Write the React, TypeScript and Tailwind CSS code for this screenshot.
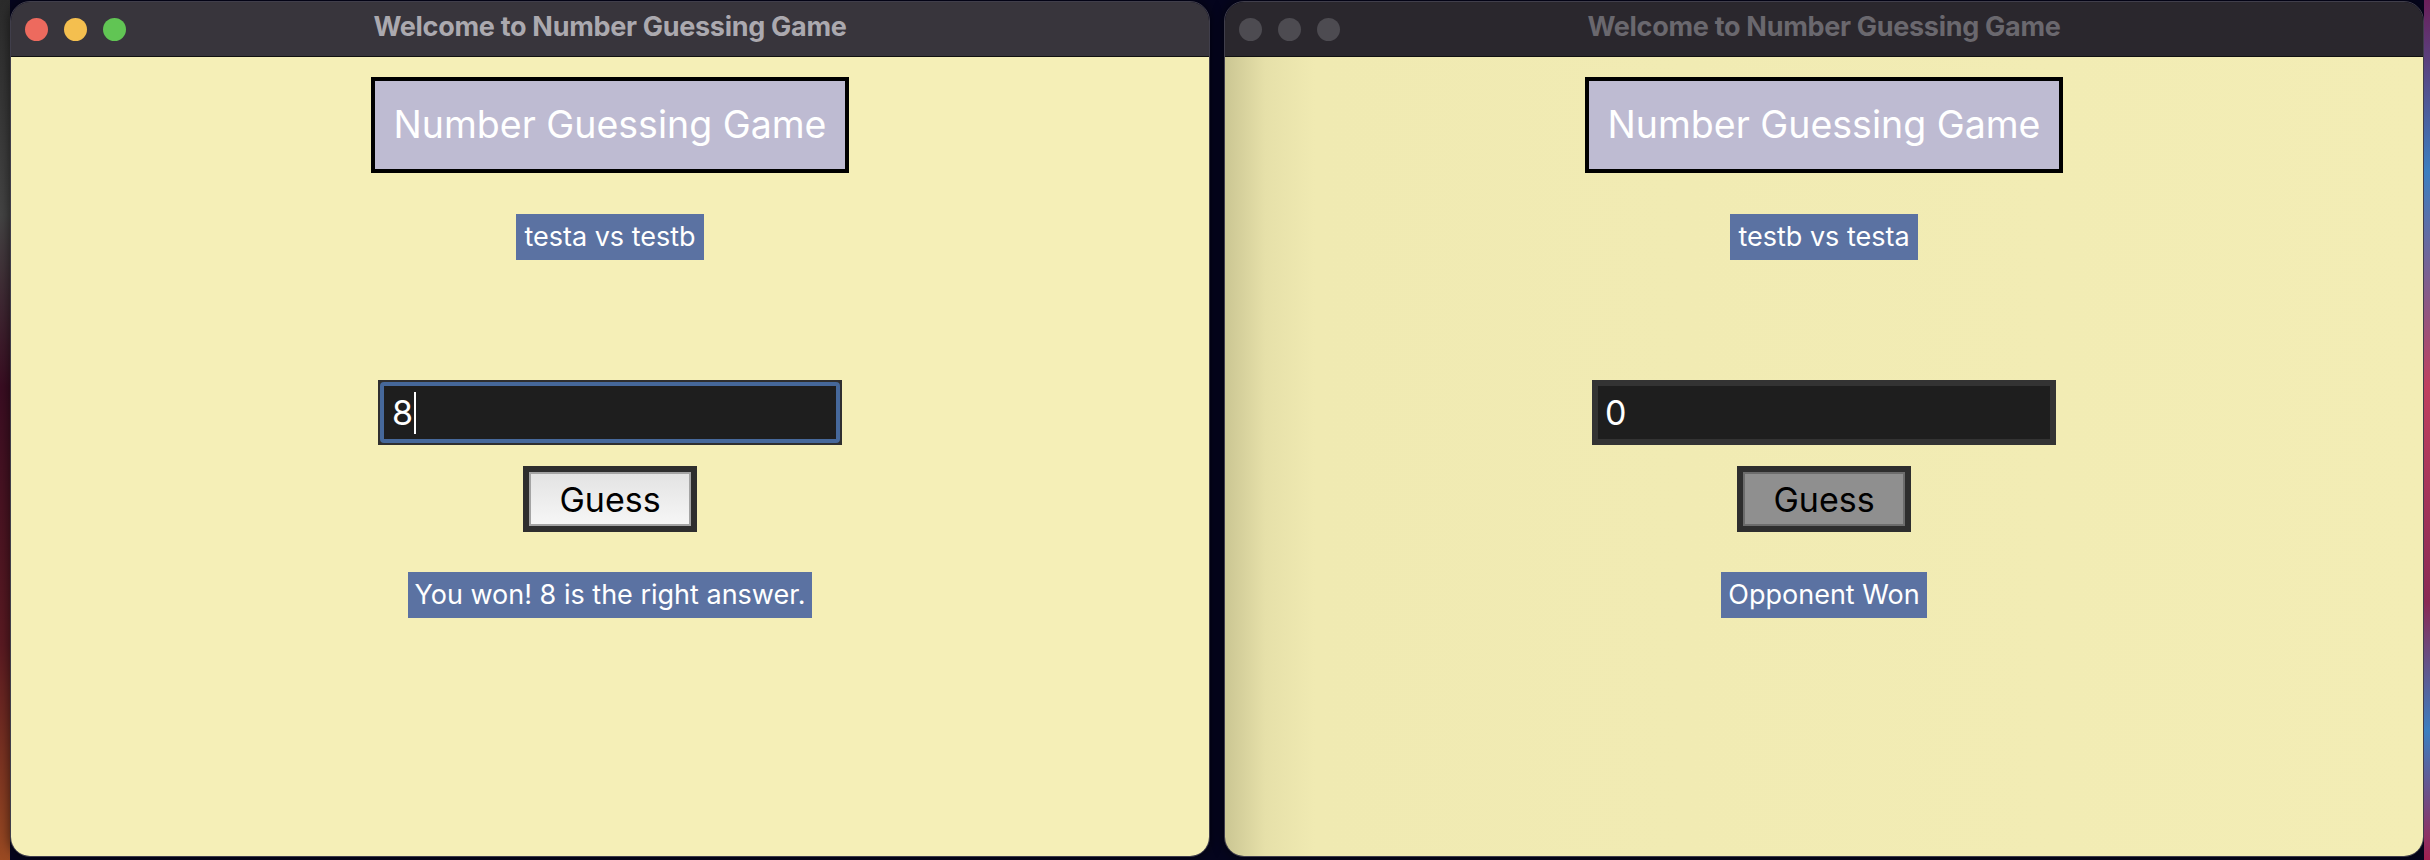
import React from 'react';

type WinProps = {
  active: boolean;
  players: string;
  value: string;
  result: string;
};

function TrafficLights({ active }: { active: boolean }) {
  return (
    <div className="flex items-center gap-[16px] pl-[14px]">
      <span className={`w-[23px] h-[23px] rounded-full ${active ? 'bg-[#ed6a5e]' : 'bg-[#4d4b51]'}`} />
      <span className={`w-[23px] h-[23px] rounded-full ${active ? 'bg-[#f4bf4f]' : 'bg-[#4d4b51]'}`} />
      <span className={`w-[23px] h-[23px] rounded-full ${active ? 'bg-[#61c554]' : 'bg-[#4d4b51]'}`} />
    </div>
  );
}

function GameWindow({ active, players, value, result }: WinProps) {
  return (
    <div className="w-[1200px] h-[856px] rounded-[20px] overflow-hidden flex flex-col border border-[#5a575e]/70 shadow-[0_0_12px_rgba(0,0,0,0.6)]">
      {/* title bar */}
      <div
        className={`h-[55px] shrink-0 grid grid-cols-[1fr_auto_1fr] items-center border-b border-[#111] ${
          active ? 'bg-[#38353c]' : 'bg-[#2a272d]'
        }`}
      >
        <TrafficLights active={active} />
        <div className={`text-[27px] font-bold tracking-[-0.3px] -mt-[4px] ${active ? 'text-[#aba9af]' : 'text-[#6a686e]'}`}>
          Welcome to Number Guessing Game
        </div>
        <div />
      </div>

      {/* content */}
      <div
        className={`flex-1 flex flex-col items-center ${
          active ? 'bg-[#f5efb7]' : 'bg-[linear-gradient(to_right,#cbc693,#e6e0a9_40px,#f0eab2_90px,#f3edb5)]'
        }`}
      >
        <div className="mt-[20px] w-[478px] h-[96px] border-4 border-black bg-[#bebbd2] text-white text-[37.5px] flex items-center justify-center">
          Number Guessing Game
        </div>

        <div className="mt-[41px] h-[46px] px-[8px] bg-[#5b72a2] text-white text-[27px] flex items-center">
          {players}
        </div>

        {active ? (
          <div className="mt-[120px] w-[464px] h-[65px] bg-[#2f2f2f] p-[2px]">
            <div className="w-full h-full rounded-[4px] border-[4px] border-[#46689a] bg-[#1e1e1e] flex items-center pl-[8px]">
              <span className="text-white text-[34px] leading-none">{value}</span>
              <span className="ml-[1px] w-[2px] h-[42px] bg-white" />
            </div>
          </div>
        ) : (
          <div className="mt-[120px] w-[464px] h-[65px] border-[6px] border-[#333] bg-[#1e1e1e] flex items-center pl-[7px]">
            <span className="text-white text-[34px] leading-none">{value}</span>
          </div>
        )}

        <div className="mt-[21px] w-[174px] h-[66px] border-[6px] border-[#2e2e2e] bg-[#2e2e2e]">
          <div
            className={`w-full h-full border-[2px] flex items-center justify-center text-black text-[34px] ${
              active
                ? 'border-[#a4a4a4] bg-[linear-gradient(to_bottom,#e3e3e3,#f6f6f6)]'
                : 'border-[#6c6c6c] bg-[#8f8f8f]'
            }`}
          >
            Guess
          </div>
        </div>

        <div className="mt-[40px] h-[46px] px-[7px] bg-[#5b72a2] text-white text-[27px] flex items-center">
          {result}
        </div>
      </div>
    </div>
  );
}

export default function App() {
  return (
    <div
      className="w-[2430px] h-[860px] flex bg-[#05051e] overflow-hidden"
      style={{ fontFamily: 'Inter, "Noto Sans", sans-serif' }}
    >
      <div className="w-[10px] shrink-0 bg-[linear-gradient(to_bottom,#2b2b2b,#444_25%,#3a0d22_45%,#5a1a22_75%,#9a4a22)]" />
      <div className="pt-[1px] shrink-0">
        <GameWindow active players="testa vs testb" value="8" result="You won! 8 is the right answer." />
      </div>
      <div className="w-[14px] shrink-0" />
      <div className="pt-[1px] shrink-0">
        <GameWindow active={false} players="testb vs testa" value="0" result="Opponent Won" />
      </div>
      <div className="w-[6px] shrink-0 bg-[linear-gradient(to_bottom,#6a1f5a,#3c7fc0_20%,#c04060_45%,#8a2a55_70%,#3c7fc0_85%,#a02050)]" />
    </div>
  );
}
